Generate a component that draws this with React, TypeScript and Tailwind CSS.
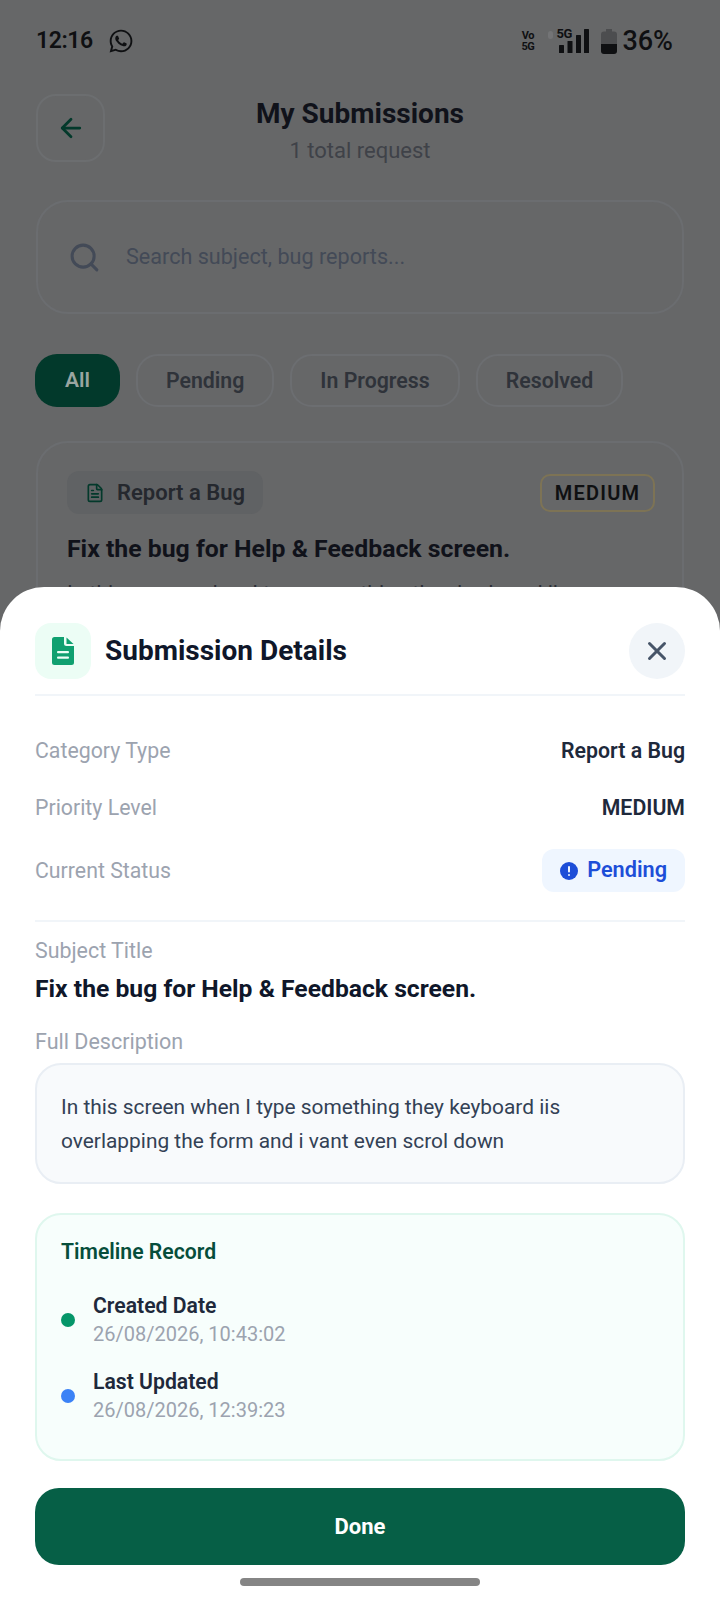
import React from "react";
import { ArrowLeft, Search, X, FileText } from "lucide-react";
import { FaWhatsapp } from "react-icons/fa";

const filters = ["All", "Pending", "In Progress", "Resolved"];

function SignalBars() {
  return (
    <svg width="30" height="24" viewBox="0 0 30 24" className="text-[#0f1012]">
      <rect x="0" y="16" width="5" height="8" fill="currentColor" rx="0.5" />
      <rect x="8.500" y="12" width="5" height="12" fill="currentColor" rx="0.5" />
      <rect x="17" y="6" width="5" height="18" fill="currentColor" rx="0.5" />
      <rect x="25" y="0" width="5" height="24" fill="currentColor" rx="0.5" />
    </svg>
  );
}

function Battery() {
  return (
    <svg width="16" height="25" viewBox="0 0 16 25">
      <path d="M5 0h6v2.500h2a3 3 0 0 1 3 3V15H0V5.500a3 3 0 0 1 3-3h2z" fill="#4c4d4f" />
      <path d="M0 15h16v7a3 3 0 0 1-3 3H3a3 3 0 0 1-3-3z" fill="#0f1012" />
    </svg>
  );
}

function DocFilled() {
  return (
    <svg width="22" height="28" viewBox="0 0 22 28">
      <path
        d="M2.500 0H12v6.500A2.500 2.500 0 0 0 14.500 9H22v16.500a2.500 2.500 0 0 1-2.500 2.500h-17A2.500 2.500 0 0 1 0 25.500v-23A2.500 2.500 0 0 1 2.500 0z"
        fill="#10a070"
      />
      <path d="M14.500 0.500 21.500 7h-7z" fill="#10a070" />
      <rect x="5" y="14" width="12" height="2.200" rx="1" fill="#ecfdf5" />
      <rect x="5" y="19.500" width="12" height="2.200" rx="1" fill="#ecfdf5" />
    </svg>
  );
}

function DetailRow({ label, value }: { label: string; value: string }) {
  return (
    <div className="flex h-[57px] items-center justify-between">
      <span className="text-[21.300px] text-[#9ca3af]">{label}</span>
      <span className="text-[21.300px] font-semibold text-[#1e293b]">{value}</span>
    </div>
  );
}

function TimelineItem({ dot, label, date }: { dot: string; label: string; date: string }) {
  return (
    <div className="flex h-[76px] items-center gap-[18px]">
      <div className={`h-[14px] w-[14px] rounded-full ${dot}`} />
      <div className="flex flex-col">
        <span className="text-[21.200px] leading-[28px] font-semibold text-[#1e293b]">{label}</span>
        <span className="text-[20px] leading-[29px] text-[#9ca3af]">{date}</span>
      </div>
    </div>
  );
}

export default function App() {
  return (
    <div className="relative h-[1600px] w-[720px] overflow-hidden bg-[#666768] font-['Roboto',sans-serif]">
      {/* screen behind the sheet */}
      <div className="flex h-[82px] items-center justify-between pr-[47px] pl-[36px]">
        <div className="flex items-center gap-[15px]">
          <span className="text-[23px] font-semibold tracking-[-0.4px] text-[#0f1012]">12:16</span>
          <FaWhatsapp className="text-[26px] text-[#0f1012]" />
        </div>
        <div className="flex items-center">
          <div className="mr-[25px] flex flex-col items-center text-[11px] leading-[11px] font-bold tracking-[-0.4px] text-[#0f1012]">
            <span>Vo</span>
            <span>5G</span>
          </div>
          <div className="relative mr-[12px] flex items-end">
            <div className="absolute top-[2px] left-[-11px] h-[8px] w-[5px] rounded-full bg-[#737476]" />
            <span className="absolute top-[-2px] left-[-3px] text-[13px] leading-[13px] font-bold tracking-[-0.5px] text-[#0f1012]">
              5G
            </span>
            <SignalBars />
          </div>
          <Battery />
          <span className="ml-[5px] text-[27px] leading-none font-medium text-[#0f1012]">36%</span>
        </div>
      </div>

      <div className="relative mt-[12px] flex h-[68px] items-start px-[36px]">
        <div className="flex h-[68px] w-[69px] items-center justify-center rounded-[20px] border-2 border-[#6c6e70]">
          <ArrowLeft size={30} strokeWidth={2.2} className="text-[#03392b]" />
        </div>
        <div className="flex flex-1 flex-col items-center pr-[69px]">
          <span className="mt-[2px] text-[28px] leading-[36px] font-bold text-[#10121a]">My Submissions</span>
          <span className="mt-[1px] text-[22px] leading-[36px] text-[#3f4248]">1 total request</span>
        </div>
      </div>

      <div className="mx-[36px] mt-[38px] flex h-[114px] items-center gap-[25px] rounded-[32px] border-2 border-[#6b6d70] px-[30px]">
        <Search size={33} strokeWidth={2.2} className="text-[#434a57]" />
        <span className="text-[21.600px] text-[#434a57]">Search subject, bug reports...</span>
      </div>

      <div className="mt-[40px] ml-[35px] flex gap-[16px]">
        {filters.map((f) => (
          <div
            key={f}
            className={
              f === "All"
                ? "flex h-[53px] items-center rounded-[22px] bg-[#02392b] px-[30px] text-[21px] font-semibold text-[#9aa5a0]"
                : "flex h-[53px] items-center rounded-[22px] border-2 border-[#6c6e71] px-[28px] text-[21.300px] font-semibold text-[#2f333a]"
            }
          >
            {f}
          </div>
        ))}
      </div>

      <div className="mx-[36px] mt-[34px] h-[300px] rounded-[32px] border-2 border-[#6b6d70] pt-[28px] pr-[27px] pl-[29px]">
        <div className="flex items-center justify-between">
          <div className="flex h-[43px] items-center gap-[12px] rounded-[12px] bg-[#606264] px-[18px]">
            <FileText size={20} strokeWidth={2} className="text-[#03392b]" />
            <span className="text-[22px] font-semibold text-[#25282e]">Report a Bug</span>
          </div>
          <div className="flex h-[38px] w-[115px] items-center justify-center rounded-[10px] border-2 border-[#7d7355] text-[20px] font-semibold tracking-[1.200px] text-[#0f1012]">
            MEDIUM
          </div>
        </div>
        <div className="mt-[16px] text-[24.800px] leading-[38px] font-bold whitespace-nowrap text-[#10121a]">
          Fix the bug for Help &amp; Feedback screen.
        </div>
        <div className="mt-[8px] text-[21px] leading-[35px] whitespace-nowrap text-[#2a2e36]">
          In this screen when I type something they keyboard iis
        </div>
      </div>

      {/* bottom sheet */}
      <div className="absolute inset-x-0 top-[587px] bottom-0 rounded-t-[44px] bg-white px-[35px] pt-[36px]">
        <div className="flex items-center border-b-2 border-[#f1f5f9] pb-[15px]">
          <div className="flex h-[56px] w-[56px] items-center justify-center rounded-[16px] bg-[#ecfdf5]">
            <DocFilled />
          </div>
          <span className="ml-[14px] flex-1 text-[28px] font-bold text-[#0f172a]">Submission Details</span>
          <div className="flex h-[56px] w-[56px] items-center justify-center rounded-full bg-[#f1f5f9]">
            <X size={30} strokeWidth={2.4} className="text-[#475569]" />
          </div>
        </div>

        <div className="mt-[26px]">
          <DetailRow label="Category Type" value="Report a Bug" />
          <DetailRow label="Priority Level" value="MEDIUM" />
          <div className="mt-[13px] flex h-[43px] items-center justify-between">
            <span className="text-[21.300px] text-[#9ca3af]">Current Status</span>
            <div className="flex h-[43px] items-center gap-[9px] rounded-[12px] bg-[#eff6ff] px-[18px]">
              <svg width="18" height="18" viewBox="0 0 18 18">
                <circle cx="9" cy="9" r="9" fill="#1d4ed8" />
                <rect x="8" y="4" width="2" height="6.500" rx="1" fill="#eff6ff" />
                <rect x="8" y="12" width="2" height="2" rx="1" fill="#eff6ff" />
              </svg>
              <span className="text-[21.700px] font-semibold text-[#1d4ed8]">Pending</span>
            </div>
          </div>
        </div>

        <div className="mt-[28px] border-t-2 border-[#f1f5f9] pt-[15px]">
          <div className="text-[21.400px] leading-[28px] text-[#9ca3af]">Subject Title</div>
          <div className="mt-[9px] text-[24.700px] leading-[30px] font-bold whitespace-nowrap text-[#0f172a]">
            Fix the bug for Help &amp; Feedback screen.
          </div>
          <div className="mt-[24px] text-[21.500px] leading-[28px] text-[#9ca3af]">Full Description</div>
        </div>

        <div className="mt-[7px] h-[121px] rounded-[26px] border-2 border-[#e9eef4] bg-[#f8fafc] px-[24px] pt-[25px]">
          <p className="text-[20.900px] leading-[34px] text-[#334155]">
            In this screen when I type something they keyboard iis overlapping the form and i vant even scrol down
          </p>
        </div>

        <div className="mt-[29px] h-[248px] rounded-[26px] border-2 border-[#dff7ee] bg-[#f7fefc] px-[24px] pt-[23px]">
          <div className="text-[21.200px] leading-[28px] font-semibold text-[#064e3b]">Timeline Record</div>
          <div className="mt-[16px]">
            <TimelineItem dot="bg-[#059669]" label="Created Date" date="26/08/2026, 10:43:02" />
            <TimelineItem dot="bg-[#3b82f6]" label="Last Updated" date="26/08/2026, 12:39:23" />
          </div>
        </div>

        <div className="mt-[27px] flex h-[77px] items-center justify-center rounded-[24px] bg-[#065f46] text-[22px] font-bold text-white">
          Done
        </div>
      </div>

      {/* gesture pill */}
      <div className="absolute bottom-[14px] left-[240px] h-[8px] w-[240px] rounded-full bg-[#858585]" />
    </div>
  );
}
